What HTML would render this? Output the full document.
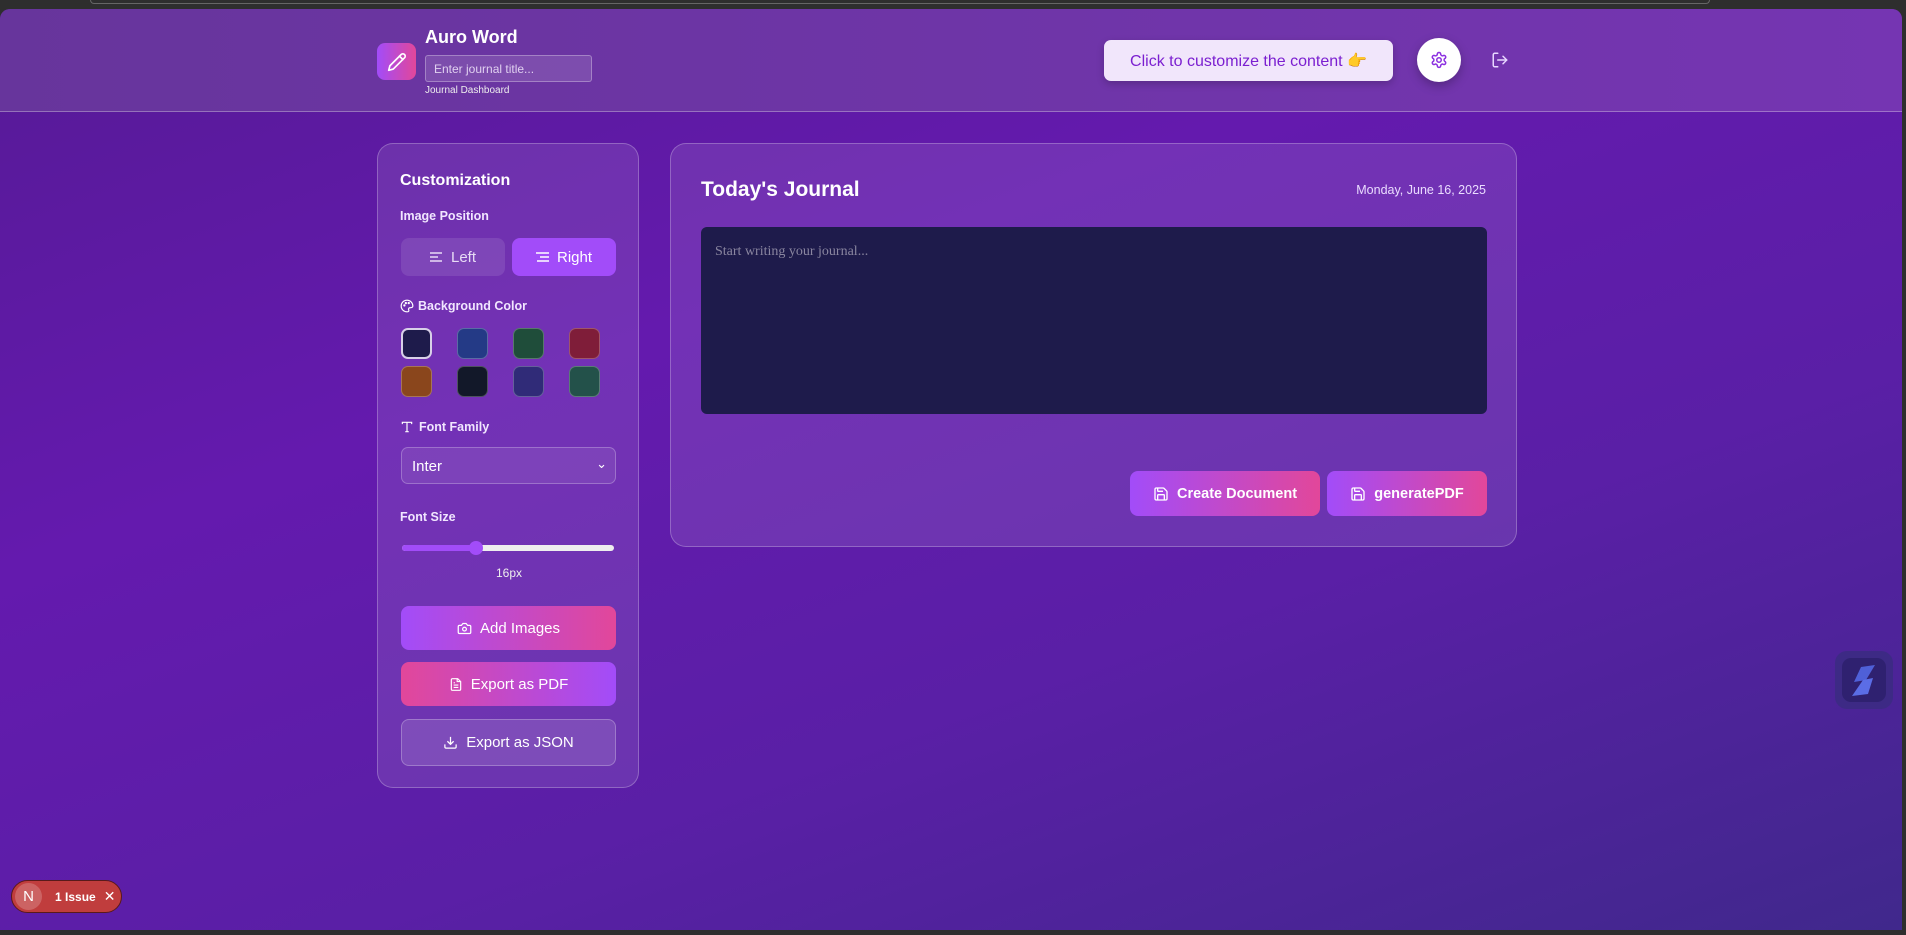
<!DOCTYPE html>
<html><head><meta charset="utf-8"><style>
*{box-sizing:border-box;margin:0;padding:0}
body{width:1906px;height:935px;overflow:hidden;font-family:"Liberation Sans",sans-serif;background:#2e2e2e;position:relative;color:#fff}
.bg{position:absolute;left:0;top:9px;width:1902px;height:921px;border-radius:10px 10px 0 0;background:linear-gradient(160deg,#561a96 0%,#641aae 35%,#5a1fa6 65%,#40288c 100%);overflow:hidden}
.hdr{position:absolute;left:0;top:0;width:1902px;height:103px;background:linear-gradient(90deg,#67359c,#7535b2);border-bottom:1px solid rgba(255,255,255,.3)}
.abs{position:absolute}
.card{position:absolute;background:rgba(255,255,255,.1);border:1px solid rgba(255,255,255,.25);border-radius:16px}
.lbl{position:absolute;font-size:12.5px;font-weight:bold;color:#f1e6ff}
.btn{position:absolute;border-radius:8px;display:flex;align-items:center;justify-content:center;gap:8px;font-size:15px;color:#fff}
.sw{position:absolute;width:31px;height:31px;border-radius:7px;border:1px solid rgba(255,255,255,.25)}
.grad{background:linear-gradient(90deg,#a24cf9,#e2479a)}
</style></head><body>
<div class="abs" style="left:90px;top:0;width:1620px;height:4px;border:1px solid #666;border-top:none;border-radius:0 0 8px 8px"></div>
<div class="bg">
<div class="hdr">
 <div class="abs grad" style="left:377px;top:34px;width:39px;height:37px;border-radius:8px;display:flex;align-items:center;justify-content:center">
  <svg width="20" height="20" viewBox="0 0 24 24" fill="none" stroke="#fff" stroke-width="2" stroke-linecap="round" stroke-linejoin="round"><path d="M17 3a2.8 2.8 0 0 1 4 4L7.5 20.5 2 22l1.5-5.5Z"/><path d="m15 5 4 4"/></svg></div>
 <div class="abs" style="left:425px;top:18px;font-size:18px;font-weight:bold">Auro Word</div>
 <div class="abs" style="left:425px;top:46px;width:167px;height:27px;border:1px solid rgba(255,255,255,.3);background:rgba(255,255,255,.12);border-radius:3px;font-size:12px;color:#e0d0f0;padding:6px 8px">Enter journal title...</div>
 <div class="abs" style="left:425px;top:76px;font-size:10px;color:#eee">Journal Dashboard</div>
 <div class="abs" style="left:1104px;top:31px;width:289px;height:41px;background:#f1e6fb;border-radius:7px;color:#7b1fd0;font-size:16px;display:flex;align-items:center;justify-content:center;box-shadow:0 3px 8px rgba(0,0,0,.2)">Click to customize the content 👉</div>
 <div class="abs" style="left:1417px;top:29px;width:44px;height:44px;border-radius:50%;background:#fff;display:flex;align-items:center;justify-content:center;box-shadow:0 4px 10px rgba(0,0,0,.25)">
  <svg width="18" height="18" viewBox="0 0 24 24" fill="none" stroke="#8b2fe0" stroke-width="2"><path d="M12.2 2h-.4a2 2 0 0 0-2 2v.2a2 2 0 0 1-1 1.7l-.4.3a2 2 0 0 1-2 0l-.2-.1a2 2 0 0 0-2.7.7l-.2.4a2 2 0 0 0 .7 2.7l.2.1a2 2 0 0 1 1 1.7v.5a2 2 0 0 1-1 1.7l-.2.1a2 2 0 0 0-.7 2.7l.2.4a2 2 0 0 0 2.7.7l.2-.1a2 2 0 0 1 2 0l.4.3a2 2 0 0 1 1 1.7v.2a2 2 0 0 0 2 2h.4a2 2 0 0 0 2-2v-.2a2 2 0 0 1 1-1.7l.4-.3a2 2 0 0 1 2 0l.2.1a2 2 0 0 0 2.7-.7l.2-.4a2 2 0 0 0-.7-2.7l-.2-.1a2 2 0 0 1-1-1.7v-.5a2 2 0 0 1 1-1.7l.2-.1a2 2 0 0 0 .7-2.7l-.2-.4a2 2 0 0 0-2.7-.7l-.2.1a2 2 0 0 1-2 0l-.4-.3a2 2 0 0 1-1-1.7V4a2 2 0 0 0-2-2z"/><circle cx="12" cy="12" r="3"/></svg></div>
 <svg class="abs" style="left:1491px;top:42px" width="18" height="18" viewBox="0 0 24 24" fill="none" stroke="#e8d8ff" stroke-width="2" stroke-linecap="round" stroke-linejoin="round"><path d="M9 21H5a2 2 0 0 1-2-2V5a2 2 0 0 1 2-2h4"/><path d="m16 17 5-5-5-5"/><path d="M21 12H9"/></svg>
</div>

<div class="card" style="left:377px;top:134px;width:262px;height:645px">
 <div class="abs" style="left:22px;top:28px;font-size:16px;font-weight:bold">Customization</div>
 <div class="lbl" style="left:22px;top:65px">Image Position</div>
 <div class="btn" style="left:23px;top:94px;width:104px;height:38px;background:rgba(255,255,255,.1);color:#e8dcf5;font-size:15px">
  <svg width="13" height="12" viewBox="0 0 13 12" stroke="#e8dcf5" stroke-width="1.5"><path d="M0 2h12M0 6h8M0 10h12"/></svg>Left</div>
 <div class="btn" style="left:134px;top:94px;width:104px;height:38px;background:#a24cf9;font-size:15px">
  <svg width="13" height="12" viewBox="0 0 13 12" stroke="#fff" stroke-width="1.5"><path d="M0 2h13M4 6h9M1 10h12"/></svg>Right</div>
 <div class="lbl" style="left:22px;top:155px;display:flex;align-items:center;gap:4px"><svg width="14" height="14" viewBox="0 0 24 24" fill="none" stroke="#fff" stroke-width="2"><path d="M12 22a10 10 0 1 1 10-10c0 3-3 3-5 3s-3 2-2 4-1 3-3 3z"/><circle cx="7.5" cy="11" r="1"/><circle cx="10" cy="7" r="1"/><circle cx="15" cy="7" r="1"/></svg>Background Color</div>
 <div class="sw" style="left:23px;top:184px;background:#1e1b4b;border:2px solid #d8d0e8"></div>
 <div class="sw" style="left:79px;top:184px;background:#243a86"></div>
 <div class="sw" style="left:135px;top:184px;background:#1f4d3a"></div>
 <div class="sw" style="left:191px;top:184px;background:#7f1d39"></div>
 <div class="sw" style="left:23px;top:222px;background:#8a461c"></div>
 <div class="sw" style="left:79px;top:222px;background:#121829"></div>
 <div class="sw" style="left:135px;top:222px;background:#302b78"></div>
 <div class="sw" style="left:191px;top:222px;background:#23514a"></div>
 <div class="lbl" style="left:22px;top:276px;display:flex;align-items:center;gap:5px"><svg width="14" height="14" viewBox="0 0 24 24" fill="none" stroke="#fff" stroke-width="2"><path d="M4 7V4h16v3M9 20h6M12 4v16"/></svg>Font Family</div>
 <div class="abs" style="left:23px;top:303px;width:215px;height:37px;border:1px solid rgba(255,255,255,.25);background:rgba(255,255,255,.08);border-radius:7px;font-size:15px;padding:10px 10px">Inter<span style="position:absolute;right:8px;top:8px;font-size:13px">⌄</span></div>
 <div class="lbl" style="left:22px;top:366px">Font Size</div>
 <div class="abs" style="left:24px;top:401px;width:212px;height:6px;border-radius:3px;background:#eee"></div>
 <div class="abs" style="left:24px;top:401px;width:75px;height:6px;border-radius:3px;background:#a24cf9"></div>
 <div class="abs" style="left:91px;top:397px;width:14px;height:14px;border-radius:50%;background:#a24cf9"></div>
 <div class="abs" style="left:0;width:262px;text-align:center;top:422px;font-size:12px;color:#eee">16px</div>
 <div class="btn grad" style="left:23px;top:462px;width:215px;height:44px">
  <svg width="15" height="15" viewBox="0 0 24 24" fill="none" stroke="#fff" stroke-width="2"><path d="M14.5 4h-5L7 7H4a2 2 0 0 0-2 2v9a2 2 0 0 0 2 2h16a2 2 0 0 0 2-2V9a2 2 0 0 0-2-2h-3z"/><circle cx="12" cy="13" r="3"/></svg>Add Images</div>
 <div class="btn" style="left:23px;top:518px;width:215px;height:44px;background:linear-gradient(90deg,#e2479a,#a24cf9)">
  <svg width="14" height="15" viewBox="0 0 24 24" fill="none" stroke="#fff" stroke-width="2"><path d="M15 2H6a2 2 0 0 0-2 2v16a2 2 0 0 0 2 2h12a2 2 0 0 0 2-2V7z"/><path d="M14 2v5h5M8 13h8M8 17h8M8 9h2"/></svg>Export as PDF</div>
 <div class="btn" style="left:23px;top:575px;width:215px;height:47px;background:rgba(255,255,255,.12);border:1px solid rgba(255,255,255,.25)">
  <svg width="15" height="15" viewBox="0 0 24 24" fill="none" stroke="#fff" stroke-width="2"><path d="M21 15v4a2 2 0 0 1-2 2H5a2 2 0 0 1-2-2v-4M7 10l5 5 5-5M12 15V3"/></svg>Export as JSON</div>
</div>

<div class="card" style="left:670px;top:134px;width:847px;height:404px">
 <div class="abs" style="left:30px;top:34px;font-size:21px;font-weight:bold">Today's Journal</div>
 <div class="abs" style="right:30px;top:39px;font-size:12.5px;color:#eadcff">Monday, June 16, 2025</div>
 <div class="abs" style="left:30px;top:83px;width:786px;height:187px;background:#1e1b4b;border-radius:6px;padding:17px 14px;font-family:'Liberation Serif',serif;font-size:14px;color:#8a86a0">Start writing your journal...</div>
 <div class="btn grad" style="left:459px;top:327px;width:190px;height:45px;font-weight:bold;font-size:14.5px">
  <svg width="16" height="16" viewBox="0 0 24 24" fill="none" stroke="#fff" stroke-width="2"><path d="M15.2 3a2 2 0 0 1 1.4.6l3.8 3.8a2 2 0 0 1 .6 1.4V19a2 2 0 0 1-2 2H5a2 2 0 0 1-2-2V5a2 2 0 0 1 2-2z"/><path d="M17 21v-7a1 1 0 0 0-1-1H8a1 1 0 0 0-1 1v7M7 3v4a1 1 0 0 0 1 1h7"/></svg>Create Document</div>
 <div class="btn grad" style="left:656px;top:327px;width:160px;height:45px;font-weight:bold;font-size:14.5px">
  <svg width="16" height="16" viewBox="0 0 24 24" fill="none" stroke="#fff" stroke-width="2"><path d="M15.2 3a2 2 0 0 1 1.4.6l3.8 3.8a2 2 0 0 1 .6 1.4V19a2 2 0 0 1-2 2H5a2 2 0 0 1-2-2V5a2 2 0 0 1 2-2z"/><path d="M17 21v-7a1 1 0 0 0-1-1H8a1 1 0 0 0-1 1v7M7 3v4a1 1 0 0 0 1 1h7"/></svg>generatePDF</div>
</div>

<div class="abs" style="left:1835px;top:642px;width:58px;height:58px;border-radius:12px;background:#3d2a85;display:flex;align-items:center;justify-content:center">
 <div style="width:44px;height:44px;border-radius:9px;background:#2f2170;display:flex;align-items:center;justify-content:center">
 <svg width="26" height="34" viewBox="0 0 26 34"><path d="M10 4 24 2 15 17 3 19Z" fill="#4f60d8"/><path d="M12 17 22 15 17 31 1 33Z" fill="#5b6de6"/></svg></div></div>

<div class="abs" style="left:11px;top:871px;width:111px;height:33px;border-radius:17px;background:#c03d3d;border:1px solid #5a1a1a;display:flex;align-items:center">
 <div style="width:27px;height:27px;border-radius:50%;background:rgba(255,255,255,.2);margin-left:3px;display:flex;align-items:center;justify-content:center;font-size:15px">N</div>
 <span style="font-size:12px;font-weight:bold;margin-left:13px">1 Issue</span><span style="margin-left:8px;font-size:14px">✕</span></div>
</div>
</body></html>
